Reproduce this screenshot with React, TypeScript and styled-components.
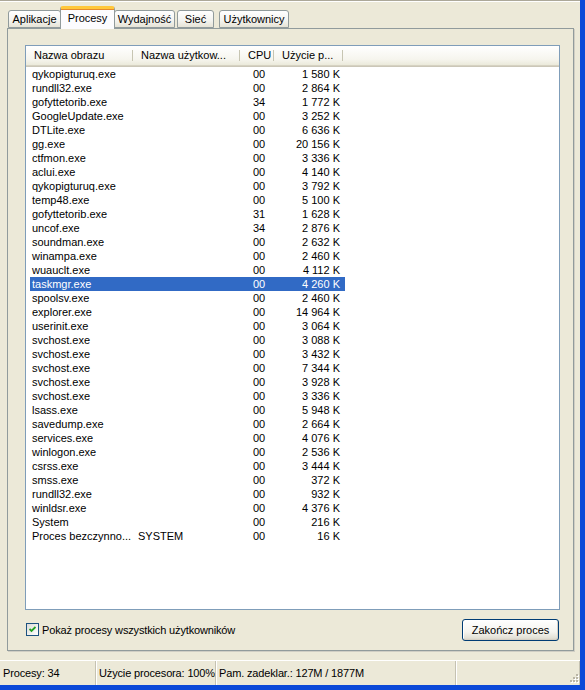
import styled, { createGlobalStyle } from 'styled-components'

const GlobalStyle = createGlobalStyle`
  html, body {
    margin: 0;
    padding: 0;
    background: #ece9d8;
  }
  body {
    font-family: 'Liberation Sans', Arial, sans-serif;
    font-size: 11px;
    color: #000;
  }
`

type Proc = { name: string; user?: string; cpu: string; mem: string }

const processes: Proc[] = [
  { name: 'qykopigturuq.exe', cpu: '00', mem: '1 580 K' },
  { name: 'rundll32.exe', cpu: '00', mem: '2 864 K' },
  { name: 'gofyttetorib.exe', cpu: '34', mem: '1 772 K' },
  { name: 'GoogleUpdate.exe', cpu: '00', mem: '3 252 K' },
  { name: 'DTLite.exe', cpu: '00', mem: '6 636 K' },
  { name: 'gg.exe', cpu: '00', mem: '20 156 K' },
  { name: 'ctfmon.exe', cpu: '00', mem: '3 336 K' },
  { name: 'aclui.exe', cpu: '00', mem: '4 140 K' },
  { name: 'qykopigturuq.exe', cpu: '00', mem: '3 792 K' },
  { name: 'temp48.exe', cpu: '00', mem: '5 100 K' },
  { name: 'gofyttetorib.exe', cpu: '31', mem: '1 628 K' },
  { name: 'uncof.exe', cpu: '34', mem: '2 876 K' },
  { name: 'soundman.exe', cpu: '00', mem: '2 632 K' },
  { name: 'winampa.exe', cpu: '00', mem: '2 460 K' },
  { name: 'wuauclt.exe', cpu: '00', mem: '4 112 K' },
  { name: 'taskmgr.exe', cpu: '00', mem: '4 260 K' },
  { name: 'spoolsv.exe', cpu: '00', mem: '2 460 K' },
  { name: 'explorer.exe', cpu: '00', mem: '14 964 K' },
  { name: 'userinit.exe', cpu: '00', mem: '3 064 K' },
  { name: 'svchost.exe', cpu: '00', mem: '3 088 K' },
  { name: 'svchost.exe', cpu: '00', mem: '3 432 K' },
  { name: 'svchost.exe', cpu: '00', mem: '7 344 K' },
  { name: 'svchost.exe', cpu: '00', mem: '3 928 K' },
  { name: 'svchost.exe', cpu: '00', mem: '3 336 K' },
  { name: 'lsass.exe', cpu: '00', mem: '5 948 K' },
  { name: 'savedump.exe', cpu: '00', mem: '2 664 K' },
  { name: 'services.exe', cpu: '00', mem: '4 076 K' },
  { name: 'winlogon.exe', cpu: '00', mem: '2 536 K' },
  { name: 'csrss.exe', cpu: '00', mem: '3 444 K' },
  { name: 'smss.exe', cpu: '00', mem: '372 K' },
  { name: 'rundll32.exe', cpu: '00', mem: '932 K' },
  { name: 'winldsr.exe', cpu: '00', mem: '4 376 K' },
  { name: 'System', cpu: '00', mem: '216 K' },
  { name: 'Proces bezczynno...', user: 'SYSTEM', cpu: '00', mem: '16 K' },
]

const SELECTED = 15

const tabs = [
  { label: 'Aplikacje', w: 53, ml: 0, mr: 0 },
  { label: 'Procesy', w: 55, ml: -1, mr: 0, active: true },
  { label: 'Wydajność', w: 61, ml: -1, mr: 2 },
  { label: 'Sieć', w: 37, ml: 0, mr: 5 },
  { label: 'Użytkownicy', w: 70, ml: 0, mr: 0 },
]

const Window = styled.div`
  width: 585px;
  height: 690px;
  box-sizing: border-box;
  border-right: 5px solid #0b49d8;
  border-bottom: 5px solid #0b49d8;
  background: #ece9d8;
  display: flex;
  flex-direction: column;
  overflow: hidden;
`

const TopLine = styled.div`
  height: 2px;
  box-sizing: border-box;
  border-top: 1px solid #aca899;
  border-bottom: 1px solid #fff;
`

const TabStrip = styled.div`
  height: 26px;
  box-sizing: border-box;
  padding-left: 8px;
  display: flex;
  align-items: flex-end;
`

const Tab = styled.div<{ $active?: boolean; $w: number; $ml: number; $mr: number }>`
  position: relative;
  box-sizing: border-box;
  width: ${(p) => p.$w}px;
  height: ${(p) => (p.$active ? 23 : 18)}px;
  margin-bottom: ${(p) => (p.$active ? -1 : 0)}px;
  margin-left: ${(p) => p.$ml}px;
  margin-right: ${(p) => p.$mr}px;
  z-index: ${(p) => (p.$active ? 2 : 1)};
  padding-top: ${(p) => (p.$active ? 3 : 2)}px;
  text-align: center;
  border: 1px solid #919b9c;
  border-bottom: ${(p) => (p.$active ? 'none' : '1px solid #919b9c')};
  border-top: ${(p) => (p.$active ? '3px solid #ffc83c' : '1px solid #919b9c')};
  border-radius: 3px 3px 0 0;
  background: ${(p) =>
    p.$active ? '#fcfcfe' : 'linear-gradient(#ffffff, #f3f3ef 60%, #e6e3d6)'};
  white-space: nowrap;
  line-height: 13px;
  ${(p) => (p.$active ? 'box-shadow: inset 0 1px 0 #e68b2c;' : '')}
`

const Panel = styled.div`
  flex: 1;
  min-height: 0;
  margin: 0 6px 0 7px;
  box-sizing: border-box;
  border: 1px solid #919b9c;
  box-shadow: 1px 1px 0 #d0cec4;
  background: #ece9d8;
  padding: 16px 13px 9px 17px;
  display: flex;
  flex-direction: column;
`

const ListView = styled.div`
  flex: 1;
  min-height: 0;
  border: 1px solid #7f9db9;
  background: #fff;
  display: flex;
  flex-direction: column;
  overflow: hidden;
`

const Header = styled.div`
  height: 20px;
  box-sizing: border-box;
  display: flex;
  background: linear-gradient(#ffffff, #f6f5ee 70%, #ebeadb);
  border-bottom: 1px solid #d6d2c2;
  box-shadow: 0 1px 0 #cbc7b8;
`

const HeadCell = styled.div<{ $w: number; $right?: boolean }>`
  width: ${(p) => p.$w}px;
  box-sizing: border-box;
  padding: 0 6px 0 8px;
  text-align: ${(p) => (p.$right ? 'right' : 'left')};
  line-height: 19px;
  white-space: nowrap;
  overflow: hidden;
  position: relative;
  &::after {
    content: '';
    position: absolute;
    right: 0;
    top: 4px;
    bottom: 4px;
    width: 1px;
    background: #c7c5b2;
    box-shadow: 1px 0 0 #fff;
  }
`

const Rows = styled.div`
  padding-top: 1px;
  display: flex;
  flex-direction: column;
`

const Row = styled.div<{ $selected?: boolean }>`
  display: grid;
  grid-template-columns: 103px 107px 34px 71px;
  width: 315px;
  margin-left: 4px;
  height: 14px;
  line-height: 14px;
  background: ${(p) => (p.$selected ? '#316ac5' : 'transparent')};
  color: ${(p) => (p.$selected ? '#fff' : '#000')};
`

const Cell = styled.div<{ $right?: boolean; $pl?: number; $pr?: number }>`
  padding-left: ${(p) => p.$pl ?? 0}px;
  padding-right: ${(p) => p.$pr ?? 0}px;
  text-align: ${(p) => (p.$right ? 'right' : 'left')};
  white-space: nowrap;
  overflow: hidden;
`

const BottomRow = styled.div`
  margin-top: 9px;
  height: 22px;
  display: flex;
  align-items: center;
  justify-content: space-between;
`

const CheckLabel = styled.label`
  display: flex;
  align-items: center;
  gap: 3px;
  margin-left: 1px;
  margin-top: -1px;
  letter-spacing: -0.15px;
`

const CheckBox = styled.span`
  width: 13px;
  height: 13px;
  box-sizing: border-box;
  border: 1px solid #1c5180;
  background: linear-gradient(135deg, #dcdcd7, #ffffff);
  display: flex;
  align-items: center;
  justify-content: center;
`

const Button = styled.button`
  width: 97px;
  height: 22px;
  margin-right: 1px;
  font-family: inherit;
  font-size: 11px;
  color: #000;
  border: 1px solid #003c74;
  border-radius: 3px;
  background: linear-gradient(#ffffff, #f5f4ef 60%, #e3e1d6 90%, #d6d0c5);
  box-shadow: inset -1px -1px 0 #d6d0c5, inset 1px 1px 0 #fff;
  padding: 0;
`

const StatusBar = styled.div`
  margin-top: 9px;
  height: 25px;
  box-sizing: border-box;
  border-top: 1px solid #fff;
  display: flex;
  align-items: center;
  position: relative;
`

const StatusCell = styled.div<{ $w?: number }>`
  ${(p) => (p.$w ? `width: ${p.$w}px;` : 'flex: 1;')}
  box-sizing: border-box;
  height: 100%;
  padding-left: 3px;
  line-height: 24px;
  letter-spacing: -0.15px;
  white-space: nowrap;
  overflow: hidden;
  border-right: 1px solid #c5c2b2;
  box-shadow: 1px 0 0 #fff;
  &:last-child {
    border-right: none;
    box-shadow: none;
  }
`

const Gripper = styled.svg`
  position: absolute;
  right: 1px;
  bottom: 1px;
`

function GripDots() {
  const dots: [number, number][] = [
    [9, 1],
    [6, 4],
    [9, 4],
    [3, 7],
    [6, 7],
    [9, 7],
  ]
  return (
    <Gripper width="12" height="11" viewBox="0 0 12 11">
      {dots.map(([x, y], i) => (
        <g key={i}>
          <rect x={x + 1} y={y + 1} width="2" height="2" fill="#fff" />
          <rect x={x} y={y} width="2" height="2" fill="#b9b5a6" />
        </g>
      ))}
    </Gripper>
  )
}

export default function App() {
  return (
    <>
      <GlobalStyle />
      <Window>
        <TopLine />
        <TabStrip>
          {tabs.map((t) => (
            <Tab key={t.label} $active={t.active} $w={t.w} $ml={t.ml} $mr={t.mr}>
              {t.label}
            </Tab>
          ))}
        </TabStrip>
        <Panel>
          <ListView>
            <Header>
              <HeadCell $w={107}>Nazwa obrazu</HeadCell>
              <HeadCell $w={107}>Nazwa użytkow...</HeadCell>
              <HeadCell $w={34} $right>CPU</HeadCell>
              <HeadCell $w={69}>Użycie p...</HeadCell>
            </Header>
            <Rows>
              {processes.map((p, i) => (
                <Row key={i} $selected={i === SELECTED}>
                  <Cell $pl={2}>{p.name}</Cell>
                  <Cell $pl={5}>{p.user ?? ''}</Cell>
                  <Cell $pl={13}>{p.cpu}</Cell>
                  <Cell $right $pr={5}>{p.mem}</Cell>
                </Row>
              ))}
            </Rows>
          </ListView>
          <BottomRow>
            <CheckLabel>
              <CheckBox>
                <svg width="7" height="7" viewBox="0 0 7 7">
                  <path d="M0.5 3 L2.5 5 L6.5 1" stroke="#21a121" strokeWidth="1.8" fill="none" />
                </svg>
              </CheckBox>
              Pokaż procesy wszystkich użytkowników
            </CheckLabel>
            <Button>Zakończ proces</Button>
          </BottomRow>
        </Panel>
        <StatusBar>
          <StatusCell $w={96}>Procesy: 34</StatusCell>
          <StatusCell $w={120}>Użycie procesora: 100%</StatusCell>
          <StatusCell $w={240}>Pam. zadeklar.: 127M / 1877M</StatusCell>
          <StatusCell />
          <GripDots />
        </StatusBar>
      </Window>
    </>
  )
}
